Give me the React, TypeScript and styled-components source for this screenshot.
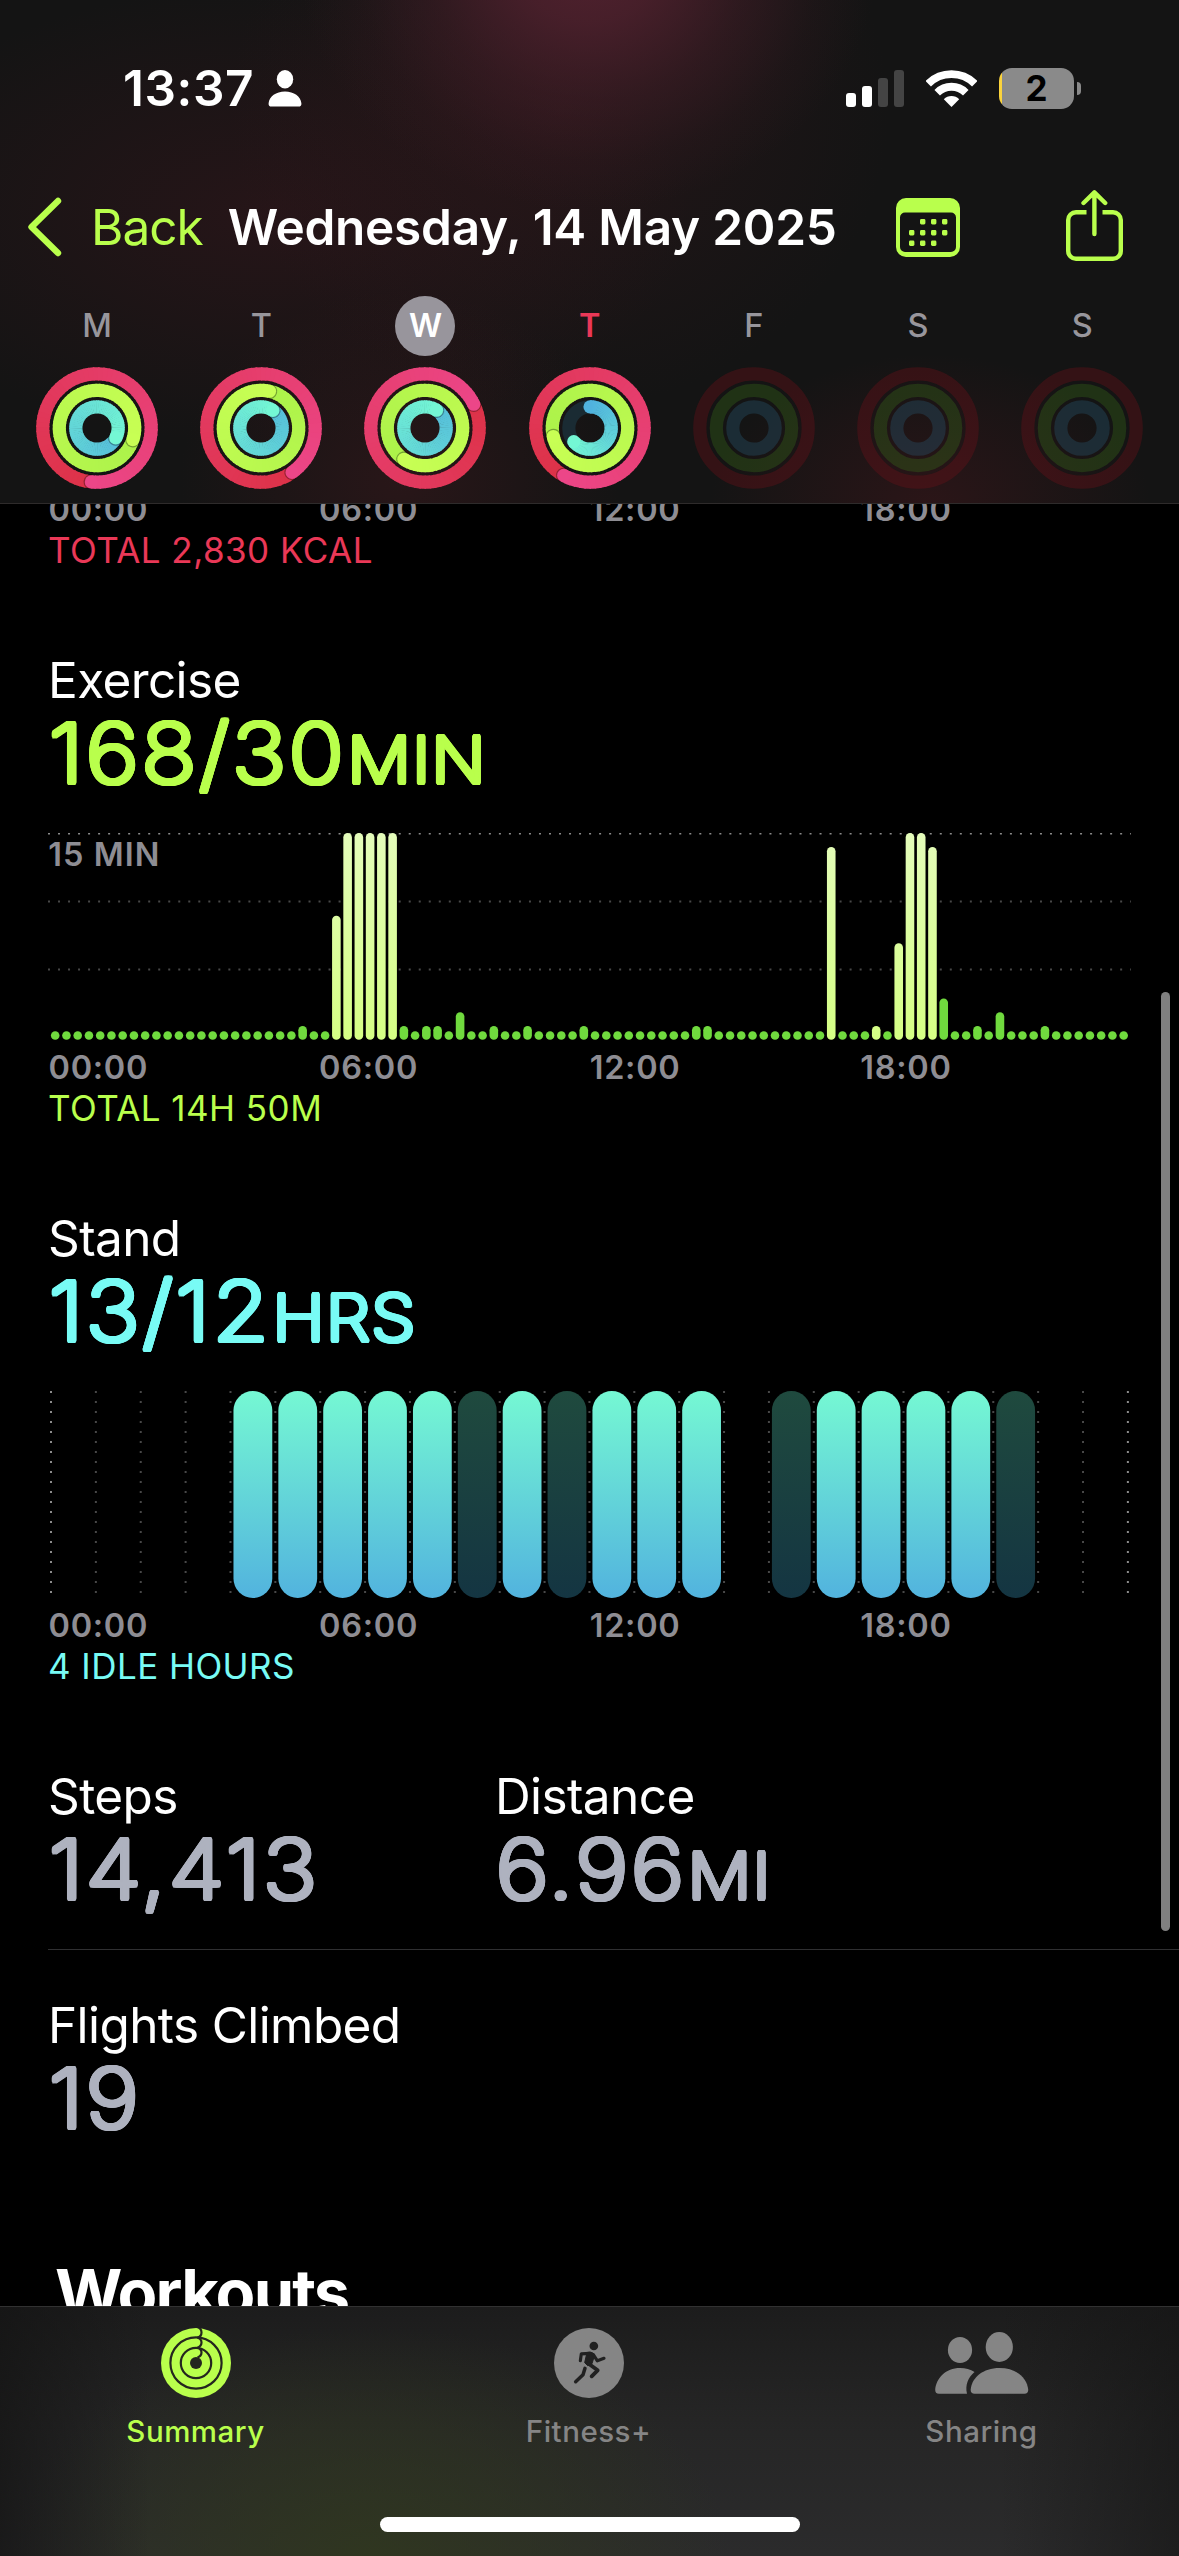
import React from 'react';
import styled, { createGlobalStyle, css } from 'styled-components';

const lime = '#b9ff4c';
const cyan = '#78fbf5';
const rose = '#ea3857';
const slate = '#aeb2bf';
const muted = '#8e8d93';

const GlobalStyle = createGlobalStyle`
  html, body { margin: 0; padding: 0; background: #000; }
  * { box-sizing: border-box; }
  svg { display: block; flex: none; }
`;

const Screen = styled.div`
  position: relative;
  display: flex;
  flex-direction: column;
  width: 1179px;
  height: 2556px;
  overflow: hidden;
  background: #000;
  color: #fff;
  font-family: Inter, 'Liberation Sans', sans-serif;
  white-space: nowrap;
`;

const Header = styled.header`
  flex: none;
  height: 504px;
  border-bottom: 1px solid #2e2b2b;
  background:
    radial-gradient(ellipse 290px 250px at 588px -40px, rgba(84, 34, 48, 0.95), rgba(84, 34, 48, 0.75) 25%, rgba(84, 34, 48, 0.35) 55%, rgba(84, 34, 48, 0.1) 80%, rgba(84, 34, 48, 0) 100%),
    radial-gradient(ellipse 330px 300px at 560px 110px, rgba(58, 24, 30, 0.4), rgba(58, 24, 30, 0.2) 50%, rgba(58, 24, 30, 0) 100%),
    radial-gradient(ellipse 420px 230px at 270px 215px, rgba(56, 22, 28, 0.5), rgba(56, 22, 28, 0.25) 50%, rgba(56, 22, 28, 0) 100%),
    radial-gradient(ellipse 220px 190px at 400px 480px, rgba(58, 24, 28, 0.55), rgba(58, 24, 28, 0) 100%),
    radial-gradient(ellipse 220px 150px at 930px 504px, rgba(58, 22, 26, 0.6), rgba(58, 22, 26, 0) 100%),
    #141414;
`;

const StatusBar = styled.div`
  display: flex;
  align-items: center;
  height: 176px;
  padding: 0 98px 0 123px;
`;

const Clock = styled.span`
  width: 145px;
  font-size: 49.5px;
  font-weight: 600;
  letter-spacing: 0.6px;
`;

const StatusIcons = styled.div`
  display: flex;
  align-items: center;
  margin-left: auto;
`;

const Signal = styled.div`
  display: flex;
  align-items: flex-end;
  gap: 6px;
  height: 37px;
  margin-right: 22px;
`;

const SignalBar = styled.i<{ $h: number; $on?: boolean }>`
  width: 10px;
  height: ${p => p.$h}px;
  border-radius: 3px;
  background: ${p => (p.$on ? '#fff' : '#444')};
`;

const Battery = styled.div`
  display: flex;
  align-items: center;
  justify-content: center;
  width: 75px;
  height: 41px;
  margin-left: 22px;
  border-radius: 13px;
  background: linear-gradient(90deg, #fbd33c 3px, #8a8a8a 3px);
  color: #000;
  font-size: 35px;
  font-weight: 700;
`;

const BatteryNub = styled.i`
  width: 4px;
  height: 13px;
  margin-left: 3px;
  border-radius: 0 4px 4px 0;
  background: #8a8a8a;
`;

const NavBar = styled.nav`
  display: flex;
  align-items: center;
  height: 102px;
  padding: 0 56px 0 27px;
`;

const BackLabel = styled.span`
  width: 137px;
  margin-left: 27px;
  color: ${lime};
  font-size: 49.5px;
  letter-spacing: -1px;
`;

const Title = styled.h1`
  width: 670px;
  margin: 0;
  font-size: 49.5px;
  font-weight: 600;
  letter-spacing: -0.25px;
`;

const ShareSlot = styled.div`
  margin: -4px 0 0 106px;
`;

const Week = styled.div`
  display: grid;
  grid-template-columns: repeat(7, 164.2px);
  padding: 18px 0 0 15px;
`;

const Day = styled.div`
  display: flex;
  flex-direction: column;
  align-items: center;
  gap: 11px;
`;

const DayLetter = styled.span<{ $state?: 'selected' | 'today' }>`
  display: flex;
  align-items: center;
  justify-content: center;
  width: 60px;
  height: 60px;
  padding-bottom: 2px;
  border-radius: 50%;
  font-size: 32.5px;
  font-weight: 500;
  color: #98969c;
  ${p => p.$state === 'selected' && css`background: #98959c; color: #fff; font-weight: 600;`}
  ${p => p.$state === 'today' && css`color: ${rose}; font-weight: 600;`}
`;

const Main = styled.main`
  flex: 1;
  min-height: 0;
  overflow: hidden;
`;

const Scrolled = styled.div`
  display: flex;
  flex-direction: column;
  margin-top: -14px;
  padding-left: 48px;
`;

const Section = styled.section`
  display: flex;
  flex-direction: column;
  margin-bottom: 80px;
`;

const Label = styled.h2`
  margin: 0;
  font-size: 49.5px;
  line-height: 58px;
  font-weight: 400;
  letter-spacing: -0.6px;
`;

const Figure = styled.div<{ $color: string }>`
  display: flex;
  align-items: baseline;
  height: 88px;
  padding-left: 0.5px;
  color: ${p => p.$color};
  font-size: 83px;
  line-height: 88px;
  font-weight: 250;
  letter-spacing: 2.2px;
  transform: scaleX(1.1);
  transform-origin: left center;
  text-shadow:
    2.4px 0, 2.2px 0.9px, 1.7px 1.7px, 0.9px 2.2px,
    0 2.4px, -0.9px 2.2px, -1.7px 1.7px, -2.2px 0.9px,
    -2.4px 0, -2.2px -0.9px, -1.7px -1.7px, -0.9px -2.2px,
    0 -2.4px, 0.9px -2.2px, 1.7px -1.7px, 2.2px -0.9px;
`;

const Unit = styled.small`
  margin-left: 1px;
  font-size: 64.5px;
  font-weight: 250;
  letter-spacing: 1px;
`;

const Axis = styled.div`
  display: grid;
  grid-template-columns: repeat(4, 270.6px);
  padding-left: 0.5px;
  color: ${muted};
  font-size: 32.5px;
  line-height: 40px;
  font-weight: 600;
  letter-spacing: 0.7px;
`;

const Total = styled.p<{ $color: string }>`
  margin: 0;
  color: ${p => p.$color};
  font-size: 35px;
  line-height: 41px;
  letter-spacing: 0.45px;
`;

const Chart = styled.div`
  height: 207px;
  margin: 36px 0 8px;
`;

const Metrics = styled.div`
  display: grid;
  grid-template-columns: 447px 1fr;
  padding-bottom: 36px;
  border-bottom: 1px solid #2f2f31;
`;

const Metric = styled.div`
  display: flex;
  flex-direction: column;
  align-items: flex-start;
`;

const Flights = styled(Metric)`
  margin-top: 46px;
`;

const SectionTitle = styled.h2`
  margin: 111px 0 0 7px;
  font-size: 65px;
  line-height: 80px;
  font-weight: 700;
  letter-spacing: -1.8px;
`;

const ScrollThumb = styled.div`
  position: absolute;
  top: 992px;
  right: 9px;
  width: 9px;
  height: 939px;
  border-radius: 5px;
  background: #808080;
`;

const TabBar = styled.footer`
  position: relative;
  flex: none;
  display: grid;
  grid-template-columns: repeat(3, 393px);
  height: 250px;
  border-top: 1px solid #313131;
  background:
    linear-gradient(90deg, rgba(20, 20, 20, 0.75), rgba(20, 20, 20, 0) 150px, rgba(20, 20, 20, 0) 1000px, rgba(20, 20, 20, 0.6)),
    radial-gradient(ellipse 360px 230px at 370px 250px, rgba(48, 56, 30, 0.85), rgba(48, 56, 30, 0.45) 50%, rgba(48, 56, 30, 0)),
    linear-gradient(180deg, #1c1c1c, #262626 50%, #2b2b2c);
`;

const Tab = styled.div<{ $active?: boolean }>`
  display: flex;
  flex-direction: column;
  align-items: center;
  padding: 21px 2px 0 0;
  color: ${p => (p.$active ? lime : '#858585')};
`;

const TabIcon = styled.div`
  display: flex;
  align-items: center;
  height: 70px;
`;

const TabLabel = styled.span`
  margin-top: 14px;
  font-size: 29.5px;
  line-height: 38px;
  font-weight: 500;
  letter-spacing: 0.5px;
`;

const HomeIndicator = styled.div`
  position: absolute;
  left: 380px;
  bottom: 24px;
  width: 420px;
  height: 15px;
  border-radius: 8px;
  background: #fff;
`;

type RGB = [number, number, number];
const mix = (a: RGB, b: RGB, t: number) =>
  `rgb(${a.map((v, i) => Math.round(v + (b[i] - v) * t)).join(',')})`;

interface RingProps { r: number; end: number; full: boolean; from: RGB; to: RGB; track: string }

const polar = (r: number, deg: number) => {
  const a = ((deg - 90) * Math.PI) / 180;
  return [61 + r * Math.cos(a), 61 + r * Math.sin(a)];
};

const Ring = ({ r, end, full, from, to, track }: RingProps) => {
  const start = full ? end - 360 : 0;
  const steps = 72;
  const span = (end - start) / steps;
  const arcs = Array.from({ length: steps }, (_, i) => {
    const [x1, y1] = polar(r, start + i * span);
    const [x2, y2] = polar(r, start + (i + 1) * span + (i < steps - 1 ? 1.5 : 0));
    return (
      <path key={i} d={`M${x1} ${y1}A${r} ${r} 0 0 1 ${x2} ${y2}`} stroke={mix(from, to, i / steps)} strokeWidth={13.2} fill="none" />
    );
  });
  const [cx, cy] = polar(r, end);
  const [ox, oy] = polar(r, 0);
  const [ax, ay] = polar(r - 6.6, end);
  const [bx, by] = polar(r + 6.6, end);
  return (
    <g>
      {!full && <circle cx={61} cy={61} r={r} stroke={track} strokeWidth={13.2} fill="none" />}
      {!full && <circle cx={ox} cy={oy} r={6.6} fill={mix(from, to, 0)} />}
      {arcs}
      {full && <path d={`M${ax} ${ay}A6.6 6.6 0 0 0 ${bx} ${by}`} fill="none" stroke="rgba(0,0,0,0.32)" strokeWidth={2.4} />}
      <circle cx={cx} cy={cy} r={6.6} fill={mix(from, to, 1)} />
    </g>
  );
};

const Rings = ({ ends, open }: { ends?: number[]; open?: boolean }) => (
  <svg width={122} height={122} viewBox="0 0 122 122">
    {ends ? (
      <>
        <Ring r={54.2} end={ends[0]} full from={[221, 50, 72]} to={[236, 70, 136]} track="#321315" />
        <Ring r={37.7} end={ends[1]} full from={[172, 242, 74]} to={[200, 255, 84]} track="#213016" />
        <Ring r={21.2} end={ends[2]} full={!open} from={open ? [80, 178, 222] : [86, 190, 218]} to={[116, 247, 212]} track="#1a2b33" />
      </>
    ) : (
      <g fill="none" strokeWidth={13.2}>
        <circle cx={61} cy={61} r={54.2} stroke="rgba(110,18,24,0.36)" />
        <circle cx={61} cy={61} r={37.7} stroke="rgba(56,104,26,0.36)" />
        <circle cx={61} cy={61} r={21.2} stroke="rgba(40,92,118,0.34)" />
      </g>
    )}
  </svg>
);

const week: { d: string; state?: 'selected' | 'today'; ends?: number[]; open?: boolean }[] = [
  { d: 'M', ends: [186, 108, 118] },
  { d: 'T', ends: [145, 13, 34] },
  { d: 'W', state: 'selected', ends: [64, 214, 33] },
  { d: 'T', state: 'today', ends: [209, 257, 230], open: true },
  { d: 'F' },
  { d: 'S' },
  { d: 'S' },
];

const exercise: Record<number, number> = {
  22: 1, 25: 9, 26: 15, 27: 15, 28: 15, 29: 15, 30: 15, 31: 1, 33: 1, 34: 1, 36: 2, 39: 1, 42: 1, 47: 1,
  57: 1, 58: 1, 69: 14, 73: 1, 75: 7, 76: 15, 77: 15, 78: 14, 79: 3, 82: 1, 84: 2, 88: 1,
};
const workoutSlots = new Set([25, 26, 27, 28, 29, 30, 69, 73, 75, 76, 77, 78]);

const ExerciseChart = () => (
  <svg width={1083} height={207} viewBox="0 0 1083 207" fontFamily="Inter, sans-serif">
    <defs>
      <linearGradient id="workout" gradientUnits="userSpaceOnUse" x1="0" y1="0" x2="0" y2="207">
        <stop offset="0" stopColor="#e4fcba" />
        <stop offset="1" stopColor="#d5ff84" />
      </linearGradient>
    </defs>
    {[0, 68, 136].map(y => (
      <line key={y} x1={0} x2={1083} y1={y + 0.5} y2={y + 0.5} stroke={y ? '#484848' : '#8c8c8c'} strokeWidth={2} strokeDasharray="2 8.02" />
    ))}
    <text x={0.3} y={33} fontSize={32.5} fontWeight={600} letterSpacing={1} fill={muted}>15 MIN</text>
    {Array.from({ length: 96 }, (_, i) => {
      const h = Math.max(8.6, (exercise[i] || 0) * 13.78);
      return (
        <rect key={i} x={2.9 + i * 11.247} y={206.8 - h} width={8.6} height={h} rx={4.3} fill={workoutSlots.has(i) ? 'url(#workout)' : '#70da3e'} />
      );
    })}
  </svg>
);

const standHours = '----sssssisisss-issssi--';

const StandChart = () => (
  <svg width={1083} height={207} viewBox="0 0 1083 207">
    <defs>
      <linearGradient id="stood" x1="0" y1="0" x2="0" y2="1">
        <stop offset="0" stopColor="#75f8d3" />
        <stop offset="1" stopColor="#52b3de" />
      </linearGradient>
      <linearGradient id="idle" x1="0" y1="0" x2="0" y2="1">
        <stop offset="0" stopColor="#1f4a3e" />
        <stop offset="1" stopColor="#143542" />
      </linearGradient>
    </defs>
    {Array.from({ length: 25 }, (_, i) => (
      <line key={i} x1={3 + i * 44.87} x2={3 + i * 44.87} y1={0} y2={203} stroke={i % 24 ? '#484848' : '#8c8c8c'} strokeWidth={2} strokeDasharray="2 8" />
    ))}
    {[...standHours].map((h, i) =>
      h === '-' ? null : (
        <rect key={i} x={6 + i * 44.87} y={0} width={38.8} height={207} rx={19.4} fill={h === 's' ? 'url(#stood)' : 'url(#idle)'} />
      ),
    )}
  </svg>
);

const TimeAxis = () => (
  <Axis>
    {['00:00', '06:00', '12:00', '18:00'].map(t => <span key={t}>{t}</span>)}
  </Axis>
);

const PersonIcon = () => (
  <svg width={34} height={37} viewBox="0 0 34 37" fill="#fff">
    <ellipse cx={17} cy={9.3} rx={8.2} ry={9.2} />
    <path d="M3.5 36.6C1.4 36.6.4 35.4.6 33.2 1.3 26.600 8 21.600 17 21.600s15.700 5 16.400 11.600c.2 2.200-.8 3.400-2.900 3.400z" />
  </svg>
);

const WifiIcon = () => (
  <svg width={51} height={37} viewBox="0 0 51 37" fill="none" stroke="#fff" strokeWidth={7.8}>
    <path d="M2.2 13.700A33.100 33.100 0 0 1 48.800 13.700" />
    <path d="M11.200 22.700A20.200 20.200 0 0 1 39.800 22.700" />
    <path d="M25.500 37 17.800 29.200A10.900 10.900 0 0 1 33.200 29.200z" fill="#fff" stroke="none" />
  </svg>
);

const ChevronIcon = () => (
  <svg width={37} height={60} viewBox="0 0 37 60" fill="none" stroke={lime} strokeWidth={6.4} strokeLinecap="round" strokeLinejoin="round">
    <path d="M31 4 4.500 30 31 56" />
  </svg>
);

const CalendarIcon = () => (
  <svg width={64} height={59} viewBox="0 0 64 59">
    <path fillRule="evenodd" fill={lime} d="M10 0h44a10 10 0 0 1 10 10v39a10 10 0 0 1-10 10H10A10 10 0 0 1 0 49V10A10 10 0 0 1 10 0zM9 14.500a5 5 0 0 0-5 5V49a5 5 0 0 0 5 5h46a5 5 0 0 0 5-5V19.500a5 5 0 0 0-5-5z" />
    {[[24, 21], [35, 21], [46, 21], [13, 32], [24, 32], [35, 32], [46, 32], [13, 42.500], [24, 42.500], [35, 42.500]].map(([x, y]) => (
      <rect key={`${x}-${y}`} x={x} y={y} width={5.400} height={5.400} rx={1.400} fill={lime} />
    ))}
  </svg>
);

const ShareIcon = () => (
  <svg width={57} height={71} viewBox="0 0 57 71" fill="none" stroke={lime} strokeWidth={4.400} strokeLinecap="round" strokeLinejoin="round">
    <path d="M20.500 22.200H10a7.800 7.800 0 0 0-7.800 7.800v31a7.800 7.800 0 0 0 7.800 7.800h37a7.800 7.800 0 0 0 7.800-7.800V30a7.800 7.800 0 0 0-7.800-7.800H36.500" strokeLinecap="butt" />
    <path d="M28.400 44V3M17.500 13 28.400 2.400 39.200 13" />
  </svg>
);

const SummaryIcon = () => (
  <svg width={70} height={70} viewBox="-35 -35 70 70" fill="none" stroke="#24261f" strokeWidth={2.200}>
    <circle r={35} fill={lime} stroke="none" />
    <circle r={25.600} />
    <circle r={15.200} />
    <circle r={6} fill="#24261f" stroke="none" />
    <path d="M1.500-36Q5.500-34.500 5.500-30.600T1.500-25.500" />
    <path d="M1.500-25.500Q5.500-24 5.500-20.500T1.500-15.200" />
    <path d="M1.500-15.200Q5.500-14 5.500-10.500T1.500-5.500" />
  </svg>
);

const FitnessIcon = () => (
  <svg width={70} height={70} viewBox="39 24 210 210" fill="none" stroke="#212121" strokeLinecap="round" strokeLinejoin="round">
    <circle cx={144} cy={129} r={105} fill="#858585" stroke="none" />
    <circle cx={158.500} cy={78} r={13} fill="#212121" stroke="none" />
    <path d="M140 97C150 95 158 98 161 105L153 131 140 137 131 128 136 106z" fill="#212121" strokeWidth={3} />
    <path d="M147 100 121 101.500 118 122" strokeWidth={9.500} />
    <path d="M157 104 169 122.500 189 115" strokeWidth={9.500} />
    <path d="M143 131 170 151 152 169" strokeWidth={11.500} />
    <path d="M132 145 126 164 104 185" strokeWidth={10.500} />
  </svg>
);

const SharingIcon = () => (
  <svg width={94} height={62} viewBox="0 0 94 62" fill="#858585">
    <ellipse cx={64.300} cy={15} rx={13.600} ry={15} />
    <ellipse cx={25} cy={18} rx={12.100} ry={13} />
    <path d="M39.500 61.700C37 61.700 35.500 60.300 35.700 57.500 36.800 45.500 48 36 64.500 36S92 45.500 93.200 57.500C93.400 60.300 92 61.700 89.500 61.700z" />
    <path d="M4 61.700C1.400 61.700 0 60.300.2 57.500 1.500 46 10.500 36 25 36c5.500 0 10.500 1.400 14.500 4C33 45.500 30 53 32 61.700z" />
  </svg>
);

export default function App() {
  return (
    <>
      <GlobalStyle />
      <Screen>
        <Header>
          <StatusBar>
            <Clock>13:37</Clock>
            <PersonIcon />
            <StatusIcons>
              <Signal>
                <SignalBar $h={14} $on />
                <SignalBar $h={21} $on />
                <SignalBar $h={29} />
                <SignalBar $h={37} />
              </Signal>
              <WifiIcon />
              <Battery>2</Battery>
              <BatteryNub />
            </StatusIcons>
          </StatusBar>
          <NavBar>
            <ChevronIcon />
            <BackLabel>Back</BackLabel>
            <Title>Wednesday, 14 May 2025</Title>
            <CalendarIcon />
            <ShareSlot><ShareIcon /></ShareSlot>
          </NavBar>
          <Week>
            {week.map((day, i) => (
              <Day key={i}>
                <DayLetter $state={day.state}>{day.d}</DayLetter>
                <Rings ends={day.ends} open={day.open} />
              </Day>
            ))}
          </Week>
        </Header>
        <Main>
          <Scrolled>
            <Section>
              <TimeAxis />
              <Total $color={rose}>TOTAL 2,830 KCAL</Total>
            </Section>
            <Section>
              <Label>Exercise</Label>
              <Figure $color={lime}>168/30<Unit>MIN</Unit></Figure>
              <Chart><ExerciseChart /></Chart>
              <TimeAxis />
              <Total $color={lime}>TOTAL 14H 50M</Total>
            </Section>
            <Section>
              <Label>Stand</Label>
              <Figure $color={cyan}>13/12<Unit>HRS</Unit></Figure>
              <Chart><StandChart /></Chart>
              <TimeAxis />
              <Total $color={cyan}>4 IDLE HOURS</Total>
            </Section>
            <Metrics>
              <Metric>
                <Label>Steps</Label>
                <Figure $color={slate}>14,413</Figure>
              </Metric>
              <Metric>
                <Label>Distance</Label>
                <Figure $color={slate}>6.96<Unit>MI</Unit></Figure>
              </Metric>
            </Metrics>
            <Flights>
              <Label>Flights Climbed</Label>
              <Figure $color={slate}>19</Figure>
            </Flights>
            <SectionTitle>Workouts</SectionTitle>
          </Scrolled>
        </Main>
        <TabBar>
          <Tab $active>
            <TabIcon><SummaryIcon /></TabIcon>
            <TabLabel>Summary</TabLabel>
          </Tab>
          <Tab>
            <TabIcon><FitnessIcon /></TabIcon>
            <TabLabel>Fitness+</TabLabel>
          </Tab>
          <Tab>
            <TabIcon><SharingIcon /></TabIcon>
            <TabLabel>Sharing</TabLabel>
          </Tab>
          <HomeIndicator />
        </TabBar>
        <ScrollThumb />
      </Screen>
    </>
  );
}
